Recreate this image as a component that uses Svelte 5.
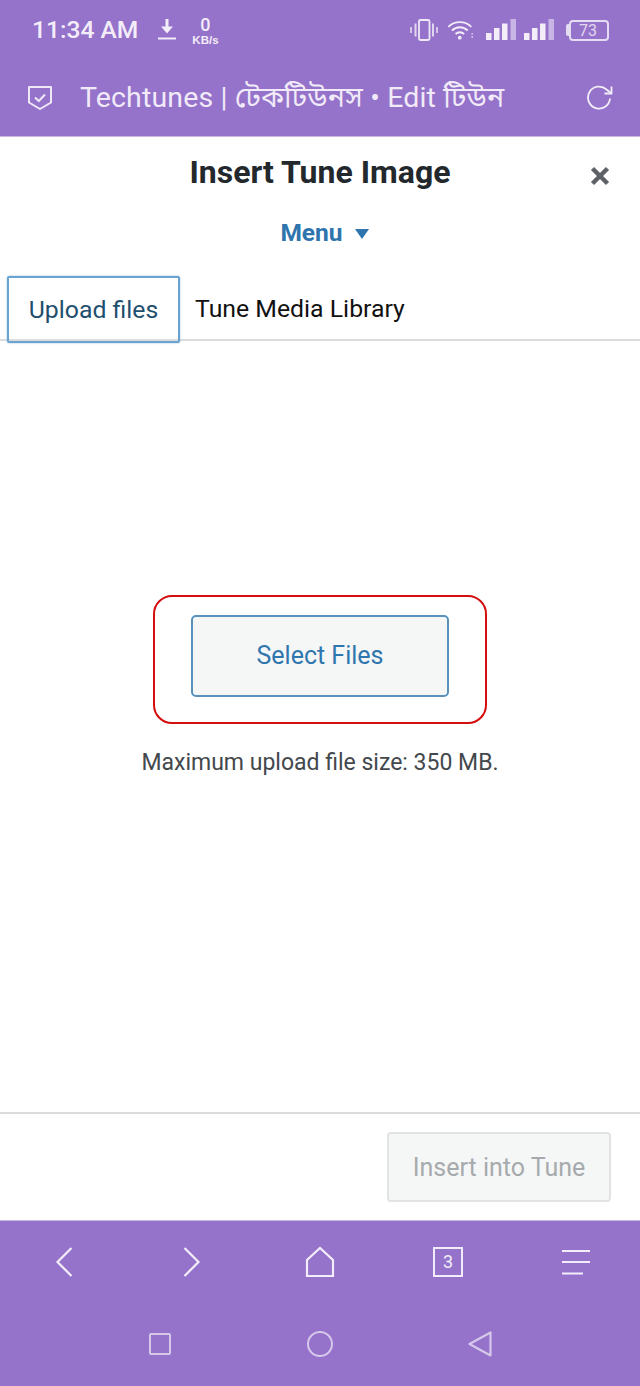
<script>
  // Bottom browser toolbar and Android nav live in the same purple block
  const title = "Techtunes | টেকটিউনস • Edit টিউন";
</script>

<div class="phone">
  <header class="top">
    <div class="status">
      <span class="time">11:34 AM</span>
      <svg class="dl" width="18" height="24" viewBox="0 0 18 24" fill="none">
        <path d="M9 1v11" stroke="#f3edf9" stroke-width="3" />
        <path d="M3 8.500h12L9 15.500z" fill="#f3edf9" />
        <path d="M0 20.500h18" stroke="#f3edf9" stroke-width="2" />
      </svg>
      <span class="speed"><b>0</b><i>KB/s</i></span>
      <span class="spacer"></span>
      <svg class="vib" width="28" height="24" viewBox="0 0 28 24" fill="none" stroke="#efe8f7">
        <rect x="9" y="2" width="10.500" height="20" rx="1.500" stroke-width="1.800" />
        <path d="M5.500 5.500v13M23 5.500v13" stroke-width="2" opacity=".85" />
        <path d="M1 9v6M27 9v6" stroke-width="2" opacity=".7" />
      </svg>
      <svg class="wifi" width="27" height="24" viewBox="0 0 30 24" fill="none" stroke="#f3edf9" stroke-width="2.200">
        <path d="M1.500 8.500C8.500 1.500 20 1.500 27 8.500" />
        <path d="M5.500 12.500c5-4.800 12.500-4.800 17.500 0" />
        <path d="M9.500 16.500c2.800-2.500 6.700-2.500 9.500 0" />
        <circle cx="14.200" cy="20.500" r="2.100" fill="#f3edf9" stroke="none" />
        <path d="M28 15.500v1.600M28 19v1.600" stroke-width="1.800" opacity=".8" />
      </svg>
      <svg class="sig" width="30" height="24" viewBox="0 0 30 24">
        <rect x="0" y="15" width="5.500" height="7" fill="#f3edf9" />
        <rect x="8" y="10" width="5.500" height="12" fill="#f3edf9" />
        <rect x="16" y="5.500" width="5.500" height="16.500" fill="#f3edf9" />
        <rect x="24.500" y="1" width="5.500" height="21" fill="#c9b5e5" />
      </svg>
      <svg class="sig two" width="30" height="24" viewBox="0 0 30 24">
        <rect x="0" y="15" width="5.500" height="7" fill="#f3edf9" />
        <rect x="8" y="10" width="5.500" height="12" fill="#f3edf9" />
        <rect x="16" y="5.500" width="5.500" height="16.500" fill="#f3edf9" />
        <rect x="24.500" y="1" width="5.500" height="21" fill="#c9b5e5" />
      </svg>
      <span class="batt"><span class="nub"></span><span class="cell">73</span></span>
    </div>
    <div class="address">
      <svg class="shield" width="26" height="28" viewBox="0 0 26 28" fill="none" stroke="#efe8f7" stroke-width="2">
        <path d="M2 3h22v15.500L13 25 2 18.500z" stroke-linejoin="round" />
        <path d="M8 13.500l3.800 3.500L18 10.500" />
      </svg>
      <span class="title">{title}</span>
      <svg class="reload" width="28" height="28" viewBox="0 0 28 28" fill="none" stroke="#f3edf9" stroke-width="1.800">
        <path d="M24 14.500A11 11 0 1 1 20.500 5.500L25 9" />
        <path d="M25.500 2.500V9.500H18.500" />
      </svg>
    </div>
  </header>

  <main class="modal">
    <div class="head">
      <h1>Insert Tune Image</h1>
      <svg class="close" width="22" height="22" viewBox="0 0 22 22" fill="none" stroke="#5e6165" stroke-width="4.400">
        <path d="M3.500 3.500l15 15M18.500 3.500l-15 15" />
      </svg>
    </div>
    <div class="menu">Menu <span class="caret"></span></div>
    <nav class="tabs">
      <span class="tab active">Upload files</span>
      <span class="tab">Tune Media Library</span>
    </nav>
    <div class="uploader">
      <div class="mark">
        <button class="select">Select Files</button>
      </div>
      <p class="max">Maximum upload file size: 350 MB.</p>
    </div>
    <footer class="foot">
      <button class="insert" disabled>Insert into Tune</button>
    </footer>
  </main>

  <div class="bottom">
    <div class="tools">
      <svg width="18" height="32" viewBox="0 0 18 32" fill="none" stroke="#f3edf9" stroke-width="2.200">
        <path d="M16.500 2L2.500 16l14 14" />
      </svg>
      <svg width="18" height="32" viewBox="0 0 18 32" fill="none" stroke="#f3edf9" stroke-width="2.200">
        <path d="M1.500 2l14 14-14 14" />
      </svg>
      <svg width="30" height="32" viewBox="0 0 30 32" fill="none" stroke="#f3edf9" stroke-width="2.200">
        <path d="M2 30V14L15 2l13 12v16z" />
      </svg>
      <span class="count">3</span>
      <svg width="30" height="26" viewBox="0 0 30 26" fill="none" stroke="#f3edf9" stroke-width="2.200">
        <path d="M1 2h28M1 13h28M1 24.500h21" />
      </svg>
    </div>
    <div class="nav">
      <span class="square"></span>
      <span class="circle"></span>
      <svg width="26" height="28" viewBox="0 0 26 28" fill="none" stroke="#d6c7eb" stroke-width="2.200" stroke-linejoin="round">
        <path d="M23.500 2.500v23L2.500 14z" />
      </svg>
    </div>
  </div>
</div>

<style>
  :global(body) {
    margin: 0;
    background: #fff;
  }

  .phone {
    width: 640px;
    height: 1386px;
    display: flex;
    flex-direction: column;
    overflow: hidden;
    font-family: Roboto, "Noto Sans", sans-serif;
  }

  .top {
    height: 137px;
    flex: none;
    background: #9573ca;
    border-bottom: 1px solid #c8b6e3;
    box-sizing: border-box;
    color: #f3edf9;
  }

  .status {
    height: 60px;
    display: flex;
    align-items: center;
    padding: 0 33px 0 32px;
  }

  .time {
    font-size: 24.600px;
    font-weight: 500;
    margin-top: -1px;
  }

  .dl {
    margin-left: 20px;
  }

  .speed {
    display: flex;
    flex-direction: column;
    align-items: center;
    gap: 2px;
    margin-left: 16px;
    line-height: 1;
    padding-top: 2px;
  }

  .speed b {
    font-size: 18px;
    font-weight: 500;
    line-height: 16px;
  }

  .speed i {
    font-style: normal;
    font-size: 11.500px;
    font-weight: 700;
    line-height: 11px;
    font-family: "Liberation Sans", sans-serif;
  }

  .spacer {
    flex: 1;
  }

  .wifi {
    margin-left: 9px;
  }

  .sig {
    margin-left: 12px;
  }

  .sig.two {
    margin-left: 8px;
  }

  .batt {
    display: flex;
    align-items: center;
    margin-left: 12px;
  }

  .nub {
    width: 3px;
    height: 12px;
    background: #e6dcf2;
    border-radius: 2px 0 0 2px;
  }

  .cell {
    width: 34px;
    height: 17px;
    border: 2px solid #e6dcf2;
    border-radius: 4px;
    display: flex;
    align-items: center;
    justify-content: center;
    font-size: 16px;
    padding-right: 2px;
    margin-right: -2px;
    color: #e2d7f0;
  }

  .address {
    height: 76px;
    display: flex;
    align-items: center;
    padding: 0 26px 0 27px;
  }

  .title {
    margin-left: 27px;
    padding-top: 4px;
    font-size: 28.500px;
    letter-spacing: 0.15px;
    white-space: nowrap;
    flex: 1;
    color: #f1eaf8;
    font-family: Roboto, "Noto Sans Bengali", "Noto Sans", sans-serif;
  }

  .modal {
    flex: 1;
    min-height: 0;
    display: flex;
    flex-direction: column;
    background: #fff;
  }

  .head {
    position: relative;
    padding-top: 16px;
    height: 53px;
    text-align: center;
  }

  h1 {
    margin: 0;
    font-size: 32px;
    font-weight: 700;
    line-height: 38px;
    color: #23282d;
  }

  .close {
    position: absolute;
    right: 29px;
    top: 28px;
  }

  .menu {
    margin-top: 6px;
    height: 42px;
    line-height: 42px;
    text-align: center;
    font-size: 24.500px;
    font-weight: 700;
    color: #2e74ad;
    padding-left: 9px;
  }

  .caret {
    display: inline-block;
    width: 0;
    height: 0;
    margin-left: 6px;
    border-left: 7px solid transparent;
    border-right: 7px solid transparent;
    border-top: 10px solid #2e74ad;
    vertical-align: 2px;
  }

  .tabs {
    margin-top: 21px;
    height: 66px;
    box-sizing: border-box;
    display: flex;
    align-items: stretch;
    border-bottom: 2px solid #dcdcde;
    padding-left: 7px;
  }

  .tab {
    display: flex;
    align-items: center;
    font-size: 24.800px;
    color: #111;
    padding: 0 15px;
    height: 66px;
    box-sizing: border-box;
  }

  .tab.active {
    width: 173px;
    padding: 0;
    justify-content: center;
    color: #1f4f6e;
    border: 2px solid #6ba3d0;
    border-radius: 2px;
    box-shadow: 0 0 2px #8db9dc;
    margin-top: 1px;
    height: 67px;
  }

  .uploader {
    flex: 1;
    display: flex;
    flex-direction: column;
    align-items: center;
    padding-top: 254px;
  }

  .mark {
    width: 334px;
    height: 129px;
    box-sizing: border-box;
    border: 2px solid #d40d0d;
    border-radius: 19px;
    display: flex;
    justify-content: center;
    padding-top: 18px;
  }

  .select {
    width: 258px;
    height: 82px;
    border: 2px solid #5b92bd;
    border-radius: 5px;
    background: #f5f7f7;
    color: #2f76ae;
    font: 400 25px Roboto, sans-serif;
    padding-bottom: 2px;
  }

  .max {
    margin: 24px 0 0;
    font-size: 23px;
    line-height: 30px;
    color: #43484d;
  }

  .foot {
    height: 108px;
    flex: none;
    box-sizing: border-box;
    border-top: 2px solid #dcdcde;
    display: flex;
    justify-content: flex-end;
    align-items: flex-start;
    padding: 18px 29px 0 0;
  }

  .insert {
    width: 224px;
    height: 70px;
    border: 2px solid #e2e4e4;
    border-radius: 4px;
    background: #f5f7f7;
    color: #a7aaad;
    font: 400 25px Roboto, sans-serif;
  }

  .bottom {
    height: 166px;
    flex: none;
    background: #9573ca;
    border-top: 1px solid #c8b6e3;
    box-sizing: border-box;
    display: flex;
    flex-direction: column;
  }

  .tools {
    height: 81px;
    display: grid;
    grid-template-columns: repeat(5, 128px);
    place-items: center;
  }

  .count {
    width: 26px;
    height: 26px;
    border: 2px solid #f3edf9;
    display: flex;
    align-items: center;
    justify-content: center;
    font-size: 18px;
    color: #f3edf9;
  }

  .nav {
    flex: 1;
    display: grid;
    grid-template-columns: repeat(3, 160px);
    padding: 0 80px;
    place-items: center;
  }

  .square {
    width: 18px;
    height: 18px;
    border: 2px solid #d6c7eb;
    border-radius: 2px;
  }

  .circle {
    width: 22px;
    height: 22px;
    border: 2px solid #d6c7eb;
    border-radius: 50%;
  }
</style>
